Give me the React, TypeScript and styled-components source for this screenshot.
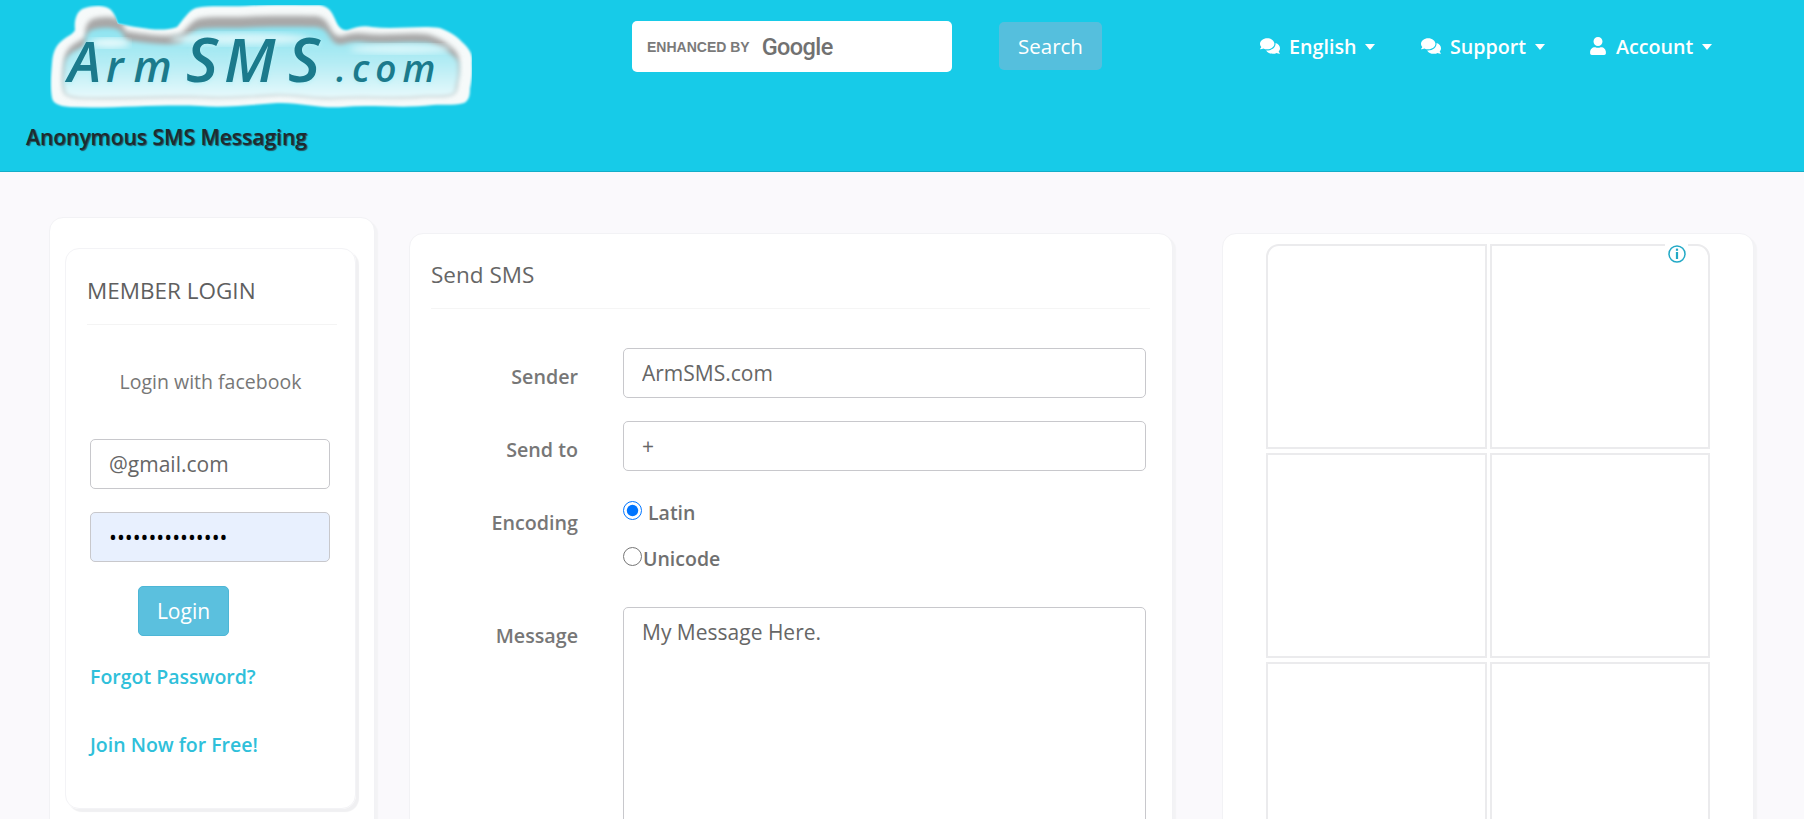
// App.tsx
import styled, { createGlobalStyle } from "styled-components";
import { FaComments, FaUser } from "react-icons/fa";

const GlobalStyle = createGlobalStyle`
  html, body { margin: 0; padding: 0; height: 100%; overflow: hidden; }
  body { background: #faf9fc; font-family: "Open Sans", sans-serif; color: #777; }
  * { box-sizing: border-box; }
`;
const Header = styled.header`
  display: flex;
  align-items: flex-start;
  height: 172px;
  background: #17cbe8;
  border-bottom: 1px solid #13aec8;
`;
const Brand = styled.div`
  width: 632px;
  padding: 5px 0 0 26px;
`;
const LogoWrap = styled.div`
  margin-left: 24px;
  svg { display: block; }
`;
const Tagline = styled.div`
  margin-top: 16px;
  font-size: 21px;
  font-weight: 600;
  line-height: 24px;
  color: #1d2b30;
  text-shadow: 1px 1px 1px #24505c;
`;
const GoogleBox = styled.div`
  display: flex;
  align-items: center;
  width: 320px;
  height: 51px;
  margin-top: 21px;
  padding-left: 15px;
  background: #fff;
  border-radius: 5px;
  color: #757575;
`;
const EnhancedBy = styled.span`
  font-family: "Liberation Sans", sans-serif;
  font-size: 14px;
  font-weight: 700;
  color: #7a7a7a;
`;
const GoogleWord = styled.span`
  margin-left: 12px;
  font-family: "Roboto", sans-serif;
  font-size: 23.5px;
  font-weight: 500;
  letter-spacing: -0.6px;
  color: #717171;
`;
const SearchButton = styled.button`
  width: 103px;
  height: 48px;
  margin: 22px 0 0 47px;
  background: #55bfdd;
  border: none;
  border-radius: 5px;
  color: #fff;
  font: 400 20.5px "Open Sans", sans-serif;
`;
const Nav = styled.nav`
  display: flex;
  margin: 33px 0 0 158px;
`;
const NavItem = styled.a<{ $width: number }>`
  display: flex;
  align-items: center;
  gap: 9px;
  width: ${({ $width }) => $width}px;
  height: 26px;
  color: #fff;
  font-size: 19.7px;
  font-weight: 600;
`;
const Caret = styled.i`
  width: 0;
  height: 0;
  border-left: 5.5px solid transparent;
  border-right: 5.5px solid transparent;
  border-top: 6px solid #fff;
  margin-top: 2px;
`;
const Main = styled.main`
  display: flex;
  align-items: flex-start;
  padding: 45px 0 0 49px;
`;
const Card = styled.section<{ $width: number; $top: number; $left: number }>`
  width: ${({ $width }) => $width}px;
  height: 760px;
  margin: ${({ $top }) => $top}px 0 0 ${({ $left }) => $left}px;
  flex-shrink: 0;
  background: #fff;
  border: 1px solid #f2f2f5;
  border-radius: 14px;
  box-shadow: 3px 3px 1px #f3f3f5;
`;
const LoginCard = styled.div`
  width: 291px;
  height: 561px;
  margin: 30px 0 0 15px;
  padding: 23px 0 0 21px;
  border: 1px solid #f3f3f6;
  border-radius: 14px;
  box-shadow: 3px 3px 1px #f0f0f2;
`;
const LoginTitle = styled.h3`
  margin: 0;
  height: 53px;
  font-size: 22.5px;
  font-weight: 400;
  line-height: 38px;
  color: #5f5f5f;
  border-bottom: 1px solid #f4f4f4;
  margin-right: 18px;
`;
const FacebookLine = styled.div`
  margin: 44px 0 0 -21px;
  width: 291px;
  padding-right: 2px;
  text-align: center;
  font-size: 19.5px;
  line-height: 26px;
  color: #777;
`;
const TextInput = styled.input<{ $autofill?: boolean }>`
  display: block;
  height: 50px;
  padding: 0 18px;
  background: ${({ $autofill }) => ($autofill ? "#e8f0fe" : "#fff")};
  border: 1px solid #c8c8cc;
  border-radius: 5px;
  color: ${({ $autofill }) => ($autofill ? "#000" : "#666")};
  font: 400 21px "Open Sans", sans-serif;
  outline: none;
`;
const LoginInput = styled(TextInput)`
  width: 240px;
  margin: 44px 0 0 3px;
  & + & { margin-top: 23px; }
`;
const LoginButton = styled.button`
  display: block;
  width: 91px;
  height: 50px;
  margin: 24px 0 0 51px;
  background: #5bc0de;
  border: 1px solid #4db6d6;
  border-radius: 5px;
  color: #fff;
  font: 400 21px "Open Sans", sans-serif;
`;
const SideLink = styled.a`
  display: block;
  margin: 29px 0 0 3px;
  font-size: 19.5px;
  font-weight: 600;
  line-height: 24px;
  color: #2fc0da;
  & + & { margin: 44px 0 0 3px; }
`;
const SmsTitle = styled.h3`
  margin: 0 22px 0 21px;
  height: 75px;
  padding-top: 22px;
  font-size: 22.5px;
  font-weight: 400;
  line-height: 38px;
  color: #666;
  border-bottom: 1px solid #f5f5f5;
`;
const FormRow = styled.div<{ $top: number }>`
  display: grid;
  grid-template-columns: 168px 523px;
  column-gap: 45px;
  margin-top: ${({ $top }) => $top}px;
`;
const RowLabel = styled.label<{ $pad: number }>`
  padding-top: ${({ $pad }) => $pad}px;
  text-align: right;
  font-size: 19.7px;
  font-weight: 600;
  line-height: 26px;
  color: #777;
`;
const FormInput = styled(TextInput)`
  width: 523px;
`;
const RadioRow = styled.div<{ $top: number }>`
  display: flex;
  align-items: center;
  height: 30px;
  margin-top: ${({ $top }) => $top}px;
  font-size: 19.5px;
  font-weight: 600;
  color: #707070;
`;
const Radio = styled.input`
  width: 19px;
  height: 19px;
  margin: 0 0 4px 0;
`;
const RadioText = styled.span<{ $gap: number }>`
  margin-left: ${({ $gap }) => $gap}px;
`;
const MessageBox = styled.textarea`
  width: 523px;
  height: 300px;
  padding: 11px 18px;
  background: #fff;
  border: 1px solid #c8c8cc;
  border-radius: 5px;
  color: #666;
  font: 400 21px/26px "Open Sans", sans-serif;
  resize: none;
  outline: none;
`;
const AdGrid = styled.div`
  position: relative;
  display: grid;
  grid-template-columns: 221px 220px;
  grid-auto-rows: 205px;
  column-gap: 3px;
  row-gap: 4px;
  width: 444px;
  margin: 10px 0 0 43px;
`;
const AdCell = styled.div<{ $corner?: "left" | "right" }>`
  background: #fff;
  border: 2px solid #ebebed;
  border-top-left-radius: ${({ $corner }) => ($corner === "left" ? "13px" : "0")};
  border-top-right-radius: ${({ $corner }) => ($corner === "right" ? "13px" : "0")};
`;
const AdInfo = styled.div`
  position: absolute;
  top: -2px;
  right: 22px;
  display: flex;
  align-items: center;
  justify-content: center;
  width: 23px;
  height: 22px;
  padding-top: 2px;
  background: #fff;
`;

function Logo() {
  const cloud =
    "M2 58 C3 46 6 40 14 34 C20 30 24 28 25 25 C24 16 26 8 32 4 C42 0 56 0 61 5 C66 10 66 16 68 19 C88 22 110 28 127 22 C134 14 138 6 146 3 C160 0 178 2 196 1 C220 -1 250 0 270 0 C280 2 282 8 285 14 C288 22 292 26 298 25 C306 22 314 20 322 22 C345 25 370 20 390 23 C402 28 408 32 412 37 C420 44 423 50 422 58 C423 70 421 78 420 84 C420 92 418 96 414 98 C402 101 392 99 383 100 C350 104 322 99 293 102 C270 104 250 97 227 98 C200 100 175 103 150 101 C110 99 60 104 20 102 C8 101 3 98 2 93 C0 82 1 70 2 58 Z";
  const word = (
    <>
      <tspan x="18" fontSize="56">A</tspan>
      <tspan x="56" fontSize="43" letterSpacing="10">rm</tspan>
      <tspan x="136" fontSize="62">S</tspan>
      <tspan x="174" fontSize="60">M</tspan>
      <tspan x="238" fontSize="62">S</tspan>
      <tspan x="286" fontSize="37" letterSpacing="6">.com</tspan>
    </>
  );
  return (
    <svg width="422" height="104" viewBox="0 0 422 104">
      <defs>
        <filter id="soft" x="-5%" y="-10%" width="110%" height="120%"><feGaussianBlur stdDeviation="3" /></filter>
        <filter id="softer" x="-5%" y="-10%" width="110%" height="120%"><feGaussianBlur stdDeviation="0.8" /></filter>
        <filter id="glow" x="-5%" y="-20%" width="110%" height="140%"><feGaussianBlur stdDeviation="2" /></filter>
        <clipPath id="cloudClip"><path d={cloud} /></clipPath>
        <linearGradient id="inner" x1="0" y1="0" x2="0" y2="1">
          <stop offset="0" stopColor="#8be3f0" />
          <stop offset="0.5" stopColor="#b4ecf4" />
          <stop offset="1" stopColor="#e9fafc" />
        </linearGradient>
      </defs>
      <path d={cloud} fill="#f6fafa" filter="url(#softer)" />
      <g clipPath="url(#cloudClip)">
        <path d={cloud} fill="#a8a8a8" filter="url(#soft)" transform="translate(12 11) scale(0.94 0.8)" />
        <path d={cloud} fill="url(#inner)" filter="url(#soft)" transform="translate(12 22) scale(0.94 0.7)" />
        <ellipse cx="60" cy="38" rx="20" ry="5" fill="#e4f9fb" filter="url(#soft)" />
        <ellipse cx="190" cy="34" rx="70" ry="6" fill="#d8f6fa" filter="url(#soft)" />
        <ellipse cx="350" cy="44" rx="50" ry="5" fill="#d8f6fa" filter="url(#soft)" />
      </g>
      <text y="78" fontFamily="'Open Sans', sans-serif" fontStyle="italic" fontWeight="600" fill="#b5f0f7" filter="url(#glow)">{word}</text>
      <text y="77" fontFamily="'Open Sans', sans-serif" fontStyle="italic" fontWeight="600" fill="#1b7a8c">{word}</text>
    </svg>
  );
}

function InfoIcon() {
  return (
    <svg width="18" height="18" viewBox="0 0 18 18">
      <circle cx="9" cy="9" r="8" fill="none" stroke="#22a9c6" strokeWidth="1.5" />
      <rect x="7.9" y="3.6" width="2.2" height="2.2" fill="#22a9c6" />
      <rect x="7.9" y="7" width="2.2" height="7" fill="#22a9c6" />
    </svg>
  );
}

export default function App() {
  return (
    <>
      <GlobalStyle />
      <Header>
        <Brand>
          <LogoWrap><Logo /></LogoWrap>
          <Tagline>Anonymous SMS Messaging</Tagline>
        </Brand>
        <GoogleBox>
          <EnhancedBy>ENHANCED BY</EnhancedBy>
          <GoogleWord>Google</GoogleWord>
        </GoogleBox>
        <SearchButton>Search</SearchButton>
        <Nav>
          <NavItem $width={161}><FaComments size={20} /> English <Caret /></NavItem>
          <NavItem $width={168}><FaComments size={20} /> Support <Caret /></NavItem>
          <NavItem $width={130}><FaUser size={18} /> Account <Caret /></NavItem>
        </Nav>
      </Header>
      <Main>
        <Card $width={326} $top={0} $left={0}>
          <LoginCard>
            <LoginTitle>MEMBER LOGIN</LoginTitle>
            <FacebookLine>Login with facebook</FacebookLine>
            <LoginInput defaultValue="@gmail.com" />
            <LoginInput $autofill type="password" defaultValue="aaaaaaaaaaaaaaa" />
            <LoginButton>Login</LoginButton>
            <SideLink>Forgot Password?</SideLink>
            <SideLink>Join Now for Free!</SideLink>
          </LoginCard>
        </Card>
        <Card $width={764} $top={16} $left={34}>
          <SmsTitle>Send SMS</SmsTitle>
          <FormRow $top={39}>
            <RowLabel $pad={16}>Sender</RowLabel>
            <FormInput defaultValue="ArmSMS.com" />
          </FormRow>
          <FormRow $top={23}>
            <RowLabel $pad={16}>Send to</RowLabel>
            <FormInput defaultValue="+" />
          </FormRow>
          <FormRow $top={20}>
            <RowLabel $pad={19}>Encoding</RowLabel>
            <div>
              <RadioRow $top={6}><Radio type="radio" name="enc" defaultChecked /><RadioText $gap={6}>Latin</RadioText></RadioRow>
              <RadioRow $top={16}><Radio type="radio" name="enc" /><RadioText $gap={1}>Unicode</RadioText></RadioRow>
            </div>
          </FormRow>
          <FormRow $top={34}>
            <RowLabel $pad={16}>Message</RowLabel>
            <MessageBox defaultValue="My Message Here." />
          </FormRow>
        </Card>
        <Card $width={532} $top={16} $left={49}>
          <AdGrid>
            <AdCell $corner="left" />
            <AdCell $corner="right" />
            <AdCell />
            <AdCell />
            <AdCell />
            <AdCell />
            <AdInfo><InfoIcon /></AdInfo>
          </AdGrid>
        </Card>
      </Main>
    </>
  );
}
